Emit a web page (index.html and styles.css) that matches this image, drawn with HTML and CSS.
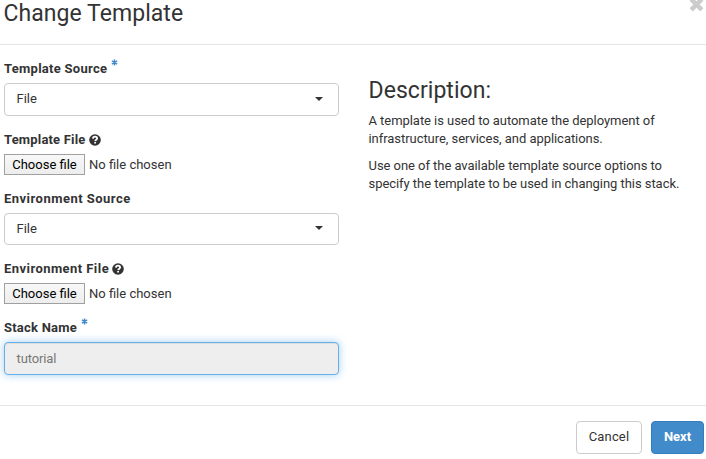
FILE: index.html
```html
<!DOCTYPE html>
<html lang="en">
<head>
<meta charset="utf-8">
<title>Change Template</title>
<link rel="stylesheet" href="styles.css">
</head>
<body>
<svg class="defs" aria-hidden="true">
  <symbol id="asterisk" viewBox="0 0 10 10"><path d="M5 .6v8.8M1.2 2.8l7.6 4.4M8.8 2.8l-7.6 4.4" stroke="currentColor" stroke-width="2.1"/></symbol>
  <symbol id="question" viewBox="0 0 12 12"><circle cx="6" cy="6" r="5.8" fill="currentColor"/><path d="M3.9 4.6C4 3.2 4.9 2.7 6 2.7c1.2 0 2.1.6 2.1 1.7C8.1 5.7 6.3 5.7 6.2 7.1" fill="none" stroke="#fff" stroke-width="1.8"/><path d="M5.2 8h1.8v1.6H5.2z" fill="#fff"/></symbol>
</svg>
<div class="modal">
  <header class="modal-header">
    <h1 class="title">Change Template</h1>
    <button class="close" aria-label="Close"><svg viewBox="0 0 14 14"><path d="M2 2l10 10M12 2L2 12" stroke="currentColor" stroke-width="4.2"/></svg></button>
  </header>
  <main class="modal-body">
    <form class="fields">
      <div class="group">
        <div class="label"><span class="t-source">Template Source</span><svg class="required"><use href="#asterisk"/></svg></div>
        <div class="control select"><span>File</span><i class="caret"></i></div>
      </div>
      <div class="group">
        <div class="label"><span class="t-file">Template File</span><svg class="help"><use href="#question"/></svg></div>
        <div class="file"><button type="button" class="choose">Choose file</button><span>No file chosen</span></div>
      </div>
      <div class="group">
        <div class="label"><span class="e-source">Environment Source</span></div>
        <div class="control select short"><span>File</span><i class="caret"></i></div>
      </div>
      <div class="group">
        <div class="label"><span class="e-file">Environment File</span><svg class="help"><use href="#question"/></svg></div>
        <div class="file"><button type="button" class="choose">Choose file</button><span>No file chosen</span></div>
      </div>
      <div class="group">
        <div class="label"><span class="s-name">Stack Name</span><svg class="required"><use href="#asterisk"/></svg></div>
        <div class="control readonly"><span>tutorial</span></div>
      </div>
    </form>
    <section class="description">
      <h2 class="title">Description:</h2>
      <p>A template is used to automate the deployment of<br>infrastructure, services, and applications.</p>
      <p>Use one of the available template source options to<br>specify the template to be used in changing this stack.</p>
    </section>
  </main>
  <footer class="modal-footer">
    <button class="btn">Cancel</button>
    <button class="btn primary">Next</button>
  </footer>
</div>
</body>
</html>
```
FILE: styles.css
```css
* { box-sizing: border-box; }
body { margin: 0; background: #fff; color: #333; font: 13px/18px Roboto, "Liberation Sans", sans-serif; overflow: hidden; }
button { font: inherit; padding: 0; }
.defs { display: none; }
.modal { height: 459px; display: flex; flex-direction: column; }
.modal-header { height: 45px; border-bottom: 1px solid #e5e5e5; padding: 0 2px 0 3.5px; display: flex; justify-content: space-between; align-items: flex-start; }
.title { margin: 0; font-size: 23px; line-height: 28px; font-weight: 400; letter-spacing: .05px; }
.close { border: 0; background: none; color: #ccc; width: 16px; height: 14px; margin-top: -3px; }
.close svg { display: block; width: 15px; height: 15px; margin: 0 auto; }
.modal-body { height: 360px; padding: 15px 0 0 4px; display: flex; gap: 29.5px; }
.fields { width: 335px; display: flex; flex-direction: column; gap: 15px; }
.label { height: 18px; display: flex; font-weight: 700; margin-bottom: 5px; }
.t-source { letter-spacing: .27px; }
.t-file { letter-spacing: .18px; }
.e-source { letter-spacing: .48px; }
.e-file { letter-spacing: .44px; }
.s-name { letter-spacing: .22px; }
.required { width: 7px; height: 7px; margin: -1px 0 0 4px; color: #428bca; }
.help { width: 12px; height: 12px; margin: 3px 0 0 3px; }
.control { height: 33px; border: 1px solid #ccc; border-radius: 4px; padding: 0 15px 0 11.5px; display: flex; align-items: center; justify-content: space-between; }
.control span { padding-bottom: 2px; }
.short { height: 32px; }
.short span { padding-bottom: 1px; }
.caret { border: 4px solid transparent; border-top-color: #333; border-bottom: 0; margin-bottom: 2px; }
.readonly { background: #eee; color: #777; border-color: #66afe9; letter-spacing: -.12px; box-shadow: inset 0 1px 1px rgba(0,0,0,.075), 0 0 8px rgba(102,175,233,.6); }
.readonly span { padding-bottom: 0; }
.file { height: 21px; display: flex; align-items: center; gap: 4px; }
.choose { width: 81px; height: 21px; border: 1px solid #a0a0a0; background: linear-gradient(#f8f8f8, #ededed); color: #000; }
.description { padding-top: 17px; letter-spacing: -.05px; }
.description p { margin: 0 0 9px; }
.description .title { margin-bottom: 7px; }
.modal-footer { flex: 1; border-top: 1px solid #e5e5e5; padding: 15px 2px 0; display: flex; justify-content: flex-end; gap: 9px; }
.btn { width: 66px; height: 33px; border: 1px solid #ccc; border-radius: 4px; background: #fff; color: #333; padding-bottom: 2px; letter-spacing: .15px; }
.primary { width: 53px; background: #428bca; border-color: #357ebd; color: #fff; font-weight: 700; letter-spacing: 0; }
```
